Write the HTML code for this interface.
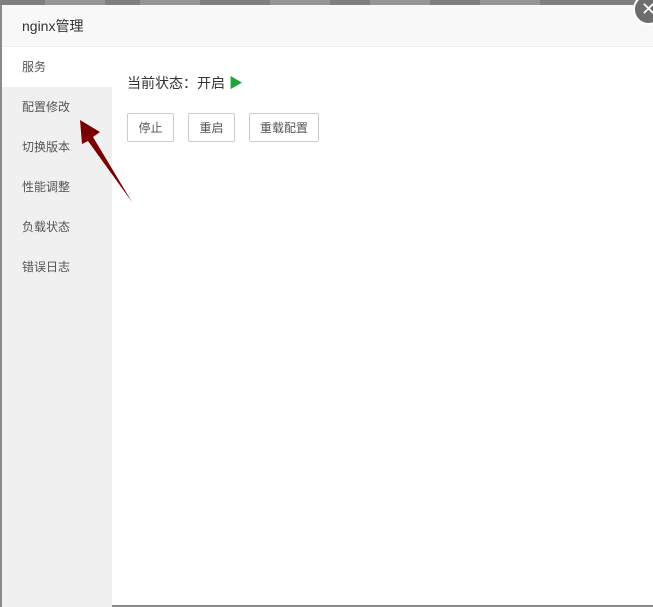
<!DOCTYPE html>
<html><head><meta charset="utf-8"><style>
body{margin:0;width:653px;height:602px;overflow:hidden;background:#8a8a8a;font-family:"Liberation Sans","Noto Sans CJK SC",sans-serif;position:relative}
.top{position:absolute;left:0;top:0;width:653px;height:5px;background:#7f7f7f}
.top span{position:absolute;top:-9px;width:60px;height:14px;background:#959595}
.dlg{position:absolute;left:2px;top:5px;width:660px;height:600px;background:#fff}
.title{height:41px;background:#f8f8f8;border-bottom:1px solid #eee;font-size:14px;color:#333;line-height:42px;padding-left:20px}
.side{position:absolute;left:0;top:42px;width:110px;height:560px;background:#f0f0f0}
.side div{height:40px;line-height:41px;padding-left:20px;font-size:12px;color:#555}
.side div.on{background:#fff}
.status{position:absolute;left:125px;top:68px;font-size:14px;color:#333}
.btn{position:absolute;top:108px;height:27px;border:1px solid #ccc;border-radius:2px;font-size:12px;color:#555;line-height:28px;text-align:center;background:#fff}
.close{position:absolute;left:633px;top:-6px;width:27px;height:27px;border-radius:50%;background:#6d6d6d;border:2px solid #fff;color:#fff;font-size:18px;line-height:26px;text-align:center}
</style></head><body>
<div class="top"><span style="left:45px"></span><span style="left:140px"></span><span style="left:270px"></span><span style="left:370px"></span><span style="left:480px"></span></div>
<div class="dlg">
<div class="title">nginx管理</div>
<div class="side"><div class="on">服务</div><div>配置修改</div><div>切换版本</div><div>性能调整</div><div>负载状态</div><div>错误日志</div></div>
<div class="status">当前状态：开启 <span style="color:#20a53a">&#9654;</span></div>
<div class="btn" style="left:125px;width:45px">停止</div>
<div class="btn" style="left:186px;width:45px">重启</div>
<div class="btn" style="left:247px;width:68px">重载配置</div>
</div>
<div class="close">✕</div>
<svg style="position:absolute;left:0;top:0" width="653" height="602"><polygon points="80,120 100,132 93,137 132,202 88,141 82,144" fill="#7a0000"/></svg>
</body></html>
